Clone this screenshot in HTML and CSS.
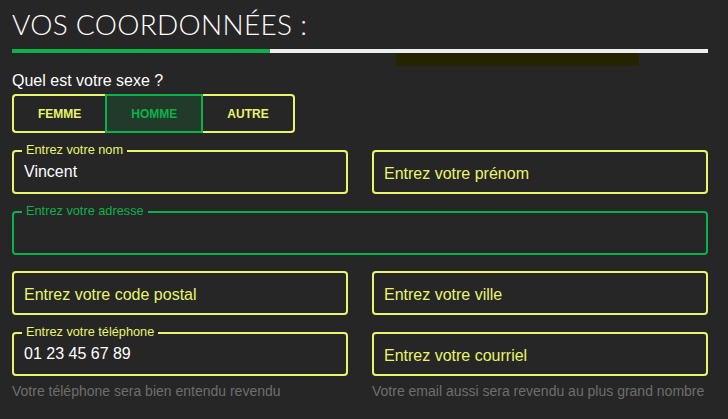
FILE: index.html
```html
<!DOCTYPE html>
<html lang="fr">
<head>
<meta charset="utf-8">
<title>Vos coordonnées</title>
<link rel="stylesheet" href="styles.css">
</head>
<body>
<div class="page">
  <h1 class="title">VOS COORDONNÉES :</h1>
  <div class="progress"><div class="progress-fill" style="width: 37.1%"></div></div>
  <div class="hint-box"></div>

  <p class="question">Quel est votre sexe ?</p>
  <div class="toggle-group">
    <button class="toggle first">FEMME</button>
    <button class="toggle selected">HOMME</button>
    <button class="toggle last">AUTRE</button>
  </div>

  <div class="form-grid">
    <div class="field">
      <div class="box">
        <span class="label">Entrez votre nom</span>
        <input class="input" value="Vincent">
      </div>
    </div>
    <div class="field">
      <div class="box">
        <input class="input empty" placeholder="Entrez votre prénom">
      </div>
    </div>
    <div class="field wide">
      <div class="box focused">
        <span class="label">Entrez votre adresse</span>
        <input class="input">
      </div>
    </div>
    <div class="field">
      <div class="box">
        <input class="input empty" placeholder="Entrez votre code postal">
      </div>
    </div>
    <div class="field">
      <div class="box">
        <input class="input empty" placeholder="Entrez votre ville">
      </div>
    </div>
    <div class="field">
      <div class="box">
        <span class="label">Entrez votre téléphone</span>
        <input class="input" value="01 23 45 67 89">
      </div>
      <p class="helper">Votre téléphone sera bien entendu revendu</p>
    </div>
    <div class="field">
      <div class="box">
        <input class="input empty" placeholder="Entrez votre courriel">
      </div>
      <p class="helper">Votre email aussi sera revendu au plus grand nombre</p>
    </div>
  </div>
</div>
</body>
</html>
```

FILE: styles.css
```css
* { box-sizing: border-box; }

html, body {
  margin: 0;
  padding: 0;
  background: #262626;
}

body {
  font-family: "Liberation Sans", Arial, sans-serif;
  color: #ffffff;
}

.page {
  position: relative;
  width: 720px;
  padding: 7px 12px 0 12px;
}

.title {
  margin: 0;
  font-family: "Lato", "Open Sans", sans-serif;
  font-weight: 300;
  font-size: 28px;
  line-height: 34px;
  letter-spacing: 0.3px;
  color: #ffffff;
}

.progress {
  margin-top: 8px;
  width: 696px;
  height: 4px;
  background: #eeeeee;
}

.progress-fill {
  height: 100%;
  background: #0cb14b;
}

.hint-box {
  position: absolute;
  left: 396px;
  top: 53px;
  width: 243px;
  height: 13px;
  background: #242400;
}

.question {
  margin: 18px 0 0 0;
  font-size: 16px;
  line-height: 19px;
  color: #ffffff;
}

.toggle-group {
  display: flex;
  margin-top: 4px;
}

.toggle {
  height: 39px;
  padding: 0 24px;
  background: transparent;
  border: 2px solid #e9f56c;
  font-family: "Liberation Sans", Arial, sans-serif;
  font-size: 12px;
  font-weight: bold;
  color: #e9f56c;
  cursor: pointer;
}

.toggle.first {
  border-right: none;
  border-radius: 4px 0 0 4px;
}

.toggle.last {
  border-left: none;
  border-radius: 0 4px 4px 0;
}

.toggle.selected {
  border-color: #0cb14b;
  background: #213a29;
  color: #0cb14b;
}

.form-grid {
  display: grid;
  grid-template-columns: 336px 336px;
  column-gap: 24px;
  row-gap: 16.7px;
  margin-top: 17px;
  width: 696px;
}

.field.wide {
  grid-column: 1 / 3;
}

.box {
  position: relative;
  height: 44px;
  border: 2px solid #e9f56c;
  border-radius: 4px;
}

.box.focused {
  border-color: #0cb14b;
}

.label {
  position: absolute;
  left: 8px;
  top: -9px;
  padding: 0 4px;
  background: #262626;
  font-size: 12.75px;
  line-height: 14px;
  color: #e9f56c;
}

.box.focused .label {
  color: #0cb14b;
}

.input {
  display: block;
  width: 100%;
  height: 100%;
  padding: 0 10px;
  border: none;
  outline: none;
  background: transparent;
  font-family: "Liberation Sans", Arial, sans-serif;
  font-size: 16px;
  color: #ffffff;
}

.input.empty {
  padding-top: 3px;
}

.input::placeholder {
  color: #e9f56c;
  opacity: 1;
}

.helper {
  margin: 7px 0 0 0;
  font-size: 14px;
  line-height: 16px;
  color: #6e6e6e;
}
```
